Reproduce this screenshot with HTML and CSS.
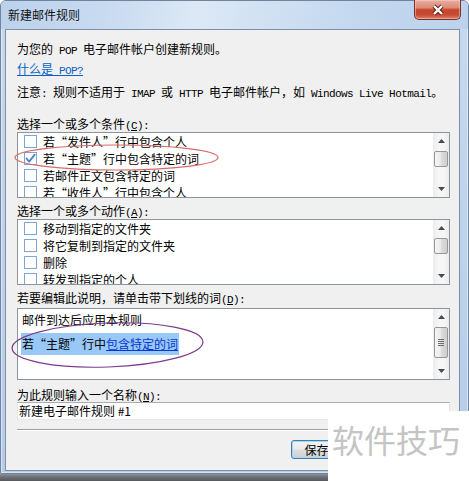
FILE: index.html
```html
<!DOCTYPE html>
<html lang="zh-CN">
<head>
<meta charset="utf-8">
<title>新建邮件规则</title>
<link rel="stylesheet" href="styles.css">
</head>
<body>
<div class="stage">
  <div class="window">
    <div class="titlebar">
      <span class="title">新建邮件规则</span>
      <div class="close">
        <svg width="14" height="12" viewBox="0 0 14 12"><path class="x-out" d="M3 2 L11 10 M11 2 L3 10"/><path class="x-in" d="M3 2 L11 10 M11 2 L3 10"/></svg>
      </div>
    </div>
    <div class="panel">
      <p class="intro">为您的<span class="en"> POP </span>电子邮件帐户创建新规则。</p>
      <a class="help-link">什么是<span class="en"> POP?</span></a>
      <p class="note">注意<span class="en">: </span>规则不适用于<span class="en"> IMAP </span>或<span class="en"> HTTP </span>电子邮件帐户，如<span class="en"> Windows Live Hotmail</span>。</p>

      <div class="label label-c">选择一个或多个条件<span class="en">(<u>C</u>):</span></div>
      <div class="listbox">
        <ul class="items">
          <li><span class="cb"></span>若“发件人”行中包含个人</li>
          <li><span class="cb"><svg width="11" height="11" viewBox="0 0 11 11"><path class="tick" d="M1.5 5.5 L4.2 8.6 L9.6 1.6"/></svg></span>若“主题”行中包含特定的词</li>
          <li><span class="cb"></span>若邮件正文包含特定的词</li>
          <li><span class="cb"></span>若“收件人”行中包含个人</li>
        </ul>
        <div class="vscroll">
          <div class="sb-btn"><svg width="7" height="4" viewBox="0 0 7 4"><path d="M0 4 L3.5 0 L7 4 Z"/></svg></div>
          <div class="sb-track"><div class="thumb"></div></div>
          <div class="sb-btn"><svg width="7" height="4" viewBox="0 0 7 4"><path d="M0 0 L7 0 L3.5 4 Z"/></svg></div>
        </div>
      </div>

      <div class="label label-a">选择一个或多个动作<span class="en">(<u>A</u>):</span></div>
      <div class="listbox">
        <ul class="items">
          <li><span class="cb"></span>移动到指定的文件夹</li>
          <li><span class="cb"></span>将它复制到指定的文件夹</li>
          <li><span class="cb"></span>删除</li>
          <li><span class="cb"></span>转发到指定的个人</li>
        </ul>
        <div class="vscroll">
          <div class="sb-btn"><svg width="7" height="4" viewBox="0 0 7 4"><path d="M0 4 L3.5 0 L7 4 Z"/></svg></div>
          <div class="sb-track"><div class="thumb"></div></div>
          <div class="sb-btn"><svg width="7" height="4" viewBox="0 0 7 4"><path d="M0 0 L7 0 L3.5 4 Z"/></svg></div>
        </div>
      </div>

      <div class="label label-d">若要编辑此说明，请单击带下划线的词<span class="en">(<u>D</u>):</span></div>
      <div class="descbox">
        <div class="desc-text">
          <div class="desc-line1">邮件到达后应用本规则</div>
          <div class="desc-line2"><span class="sel">若“主题”行中<a class="rule-link">包含特定的词</a></span></div>
        </div>
        <div class="vscroll">
          <div class="sb-btn"><svg width="7" height="4" viewBox="0 0 7 4"><path d="M0 4 L3.5 0 L7 4 Z"/></svg></div>
          <div class="sb-track"><div class="thumb thumb-tall"><svg width="6" height="8" viewBox="0 0 6 8"><path class="grip" d="M0 0.5 H6 M0 2.5 H6 M0 4.5 H6 M0 6.5 H6"/></svg></div></div>
          <div class="sb-btn"><svg width="7" height="4" viewBox="0 0 7 4"><path d="M0 0 L7 0 L3.5 4 Z"/></svg></div>
        </div>
      </div>

      <div class="label label-n">为此规则输入一个名称<span class="en">(<u>N</u>):</span></div>
      <div class="namebox">新建电子邮件规则 #1</div>

      <div class="separator"></div>

      <div class="buttons">
        <div class="btn btn-default">保存规则</div>
        <div class="btn"></div>
      </div>
    </div>
  </div>
  <div class="shadow"></div>

  <svg class="marks" width="469" height="481" viewBox="0 0 469 481">
    <ellipse class="mark-red" cx="116.5" cy="157.5" rx="101.5" ry="12.5"/>
    <ellipse class="mark-purple" cx="107.5" cy="345" rx="95.5" ry="22" transform="rotate(-2 107.5 345)"/>
  </svg>

  <div class="watermark">软件技巧</div>
</div>
</body>
</html>
```

FILE: styles.css
```css
html, body {
  margin: 0;
  padding: 0;
}

body {
  width: 469px;
  height: 481px;
  overflow: hidden;
  background: #ffffff;
  font-family: "Noto Sans CJK SC", "Noto Sans", sans-serif;
  font-size: 12px;
  color: #000;
}

.stage {
  position: relative;
  width: 469px;
  height: 481px;
}

.window {
  box-sizing: border-box;
  width: 469px;
  height: 474px;
  border: 1px solid #6f859f;
  border-radius: 6px 6px 0 0;
  background: linear-gradient(180deg, #c6d9ef 0%, #bcd2eb 60%, #b6cde8 100%);
  box-shadow: inset 0 0 0 1px rgba(255, 255, 255, 0.45);
  display: flex;
  flex-direction: column;
}

.titlebar {
  flex: none;
  height: 28px;
  padding: 0 7px;
  display: flex;
  justify-content: space-between;
  align-items: flex-start;
  border-radius: 5px 5px 0 0;
  background: linear-gradient(100deg, #bcd2ec 0%, #c7daf0 22%, #dce8f5 42%, #d2e2f3 55%, #c4d8ef 75%, #bcd2ec 100%);
}

.title {
  margin-top: 6px;
  height: 16px;
  line-height: 16px;
  color: #111;
}

.close {
  box-sizing: border-box;
  width: 47px;
  height: 20px;
  margin-top: -1px;
  border: 1px solid #7a2f24;
  border-top: none;
  border-radius: 0 0 5px 5px;
  background: linear-gradient(180deg, #e9aea2 0%, #dc8a78 40%, #c9452c 52%, #c54a33 78%, #d9866c 100%);
  box-shadow: inset 0 0 0 1px rgba(255, 210, 200, 0.5);
  display: flex;
  align-items: center;
  justify-content: center;
}

.x-out {
  stroke: #5a1e16;
  stroke-width: 4.2;
  fill: none;
}

.x-in {
  stroke: #ffffff;
  stroke-width: 2.4;
  fill: none;
}

.panel {
  flex: none;
  box-sizing: border-box;
  height: 442px;
  margin: 0 8px 0 4px;
  padding: 11px 9px 0 11px;
  border: 1px solid #7d8fa5;
  background: #f0f0f0;
}

.intro,
.note {
  margin: 0;
  height: 16px;
  line-height: 16px;
  white-space: nowrap;
}

.en {
  font-family: "Liberation Mono", monospace;
  font-size: 11px;
  line-height: 1;
  letter-spacing: -0.6px;
}

.help-link {
  display: block;
  margin-top: 4px;
  height: 16px;
  line-height: 16px;
  color: #0a62c8;
  text-decoration: underline;
  width: max-content;
}

.note {
  margin-top: 7px;
}

.label {
  height: 14px;
  line-height: 14px;
  white-space: nowrap;
}

.label-c { margin-top: 17px; }
.label-a { margin-top: 6px; }
.label-d { margin-top: 6px; }
.label-n { margin-top: 8px; }

.listbox,
.descbox {
  box-sizing: border-box;
  border: 1px solid #8e949b;
  background: #ffffff;
  display: flex;
}

.listbox {
  height: 66px;
  margin-top: 1px;
}

.descbox {
  height: 72px;
  margin-top: 3px;
}

.items {
  flex: 1;
  margin: 0;
  padding: 0 0 0 6px;
  list-style: none;
  overflow: hidden;
}

.items li {
  height: 17px;
  line-height: 17px;
  display: flex;
  align-items: center;
  white-space: nowrap;
}

.cb {
  box-sizing: border-box;
  width: 13px;
  height: 13px;
  margin-right: 6px;
  border: 1px solid #7fa5d0;
  background: #ffffff;
  display: inline-flex;
  align-items: center;
  justify-content: center;
  flex: none;
}

.tick {
  fill: none;
  stroke: #4a82c4;
  stroke-width: 1.8;
  stroke-linecap: round;
  stroke-linejoin: round;
}

.vscroll {
  flex: none;
  width: 16px;
  display: flex;
  flex-direction: column;
  background: linear-gradient(90deg, #ececec 0%, #f6f6f6 35%, #f6f6f6 65%, #ececec 100%);
}

.sb-btn {
  height: 16px;
  flex: none;
  display: flex;
  align-items: center;
  justify-content: center;
}

.sb-btn path {
  fill: #4b4b4b;
}

.sb-track {
  flex: 1;
}

.thumb {
  box-sizing: border-box;
  height: 16px;
  margin: 2px 1px 0;
  border: 1px solid #979797;
  border-radius: 2px;
  background: linear-gradient(90deg, #f5f5f5 0%, #ebebeb 45%, #dbdbdb 55%, #cfcfcf 100%);
  display: flex;
  align-items: center;
  justify-content: center;
}

.thumb-tall {
  height: 31px;
}

.grip {
  stroke: #6d6d6d;
  stroke-width: 1;
  fill: none;
}

.desc-text {
  flex: 1;
  padding: 3px 0 0 3px;
  overflow: hidden;
}

.desc-line1 {
  height: 16px;
  line-height: 16px;
  padding-left: 1px;
}

.desc-line2 {
  margin-top: 5px;
  height: 22px;
}

.sel {
  display: inline-block;
  height: 22px;
  line-height: 22px;
  padding: 0 1px;
  background: #99c8f6;
  white-space: nowrap;
}

.rule-link {
  color: #0836d0;
  text-decoration: underline;
}

.namebox {
  box-sizing: border-box;
  height: 18px;
  line-height: 16px;
  padding-left: 1px;
  border: 1px solid;
  border-color: #a9adb4 #dde1e6 #e3e9ef #e2e3ea;
  background: #ffffff;
  white-space: nowrap;
}

.separator {
  margin-top: 9px;
  height: 1px;
  background: #a0a0a0;
  border-bottom: 1px solid #ffffff;
}

.buttons {
  margin-top: 9px;
  display: flex;
  justify-content: flex-end;
  gap: 9px;
}

.btn {
  box-sizing: border-box;
  width: 75px;
  height: 19px;
  line-height: 17px;
  text-align: center;
  border: 1px solid #707070;
  border-radius: 3px;
  background: linear-gradient(180deg, #f2f2f2 0%, #ebebeb 48%, #dddddd 52%, #cfcfcf 100%);
  box-shadow: inset 0 0 0 1px rgba(255, 255, 255, 0.75);
}

.btn-default {
  border-color: #3c7fb1;
  box-shadow: inset 0 0 0 1px #a7d6f3;
}

.shadow {
  height: 7px;
  background: linear-gradient(180deg, #8b8f95 0%, #6a6d72 50%, #55585c 100%);
}

.marks {
  position: absolute;
  left: 0;
  top: 0;
  pointer-events: none;
}

.mark-red {
  fill: none;
  stroke: #d56a6a;
  stroke-width: 1.2;
}

.mark-purple {
  fill: none;
  stroke: #7d3a8e;
  stroke-width: 1.2;
}

.watermark {
  position: absolute;
  left: 328px;
  top: 411px;
  right: 0;
  bottom: 0;
  background: #ffffff;
  color: #c4c4c4;
  font-size: 32px;
  line-height: 40px;
  padding: 8px 0 0 4px;
  box-sizing: border-box;
  white-space: nowrap;
}
```
